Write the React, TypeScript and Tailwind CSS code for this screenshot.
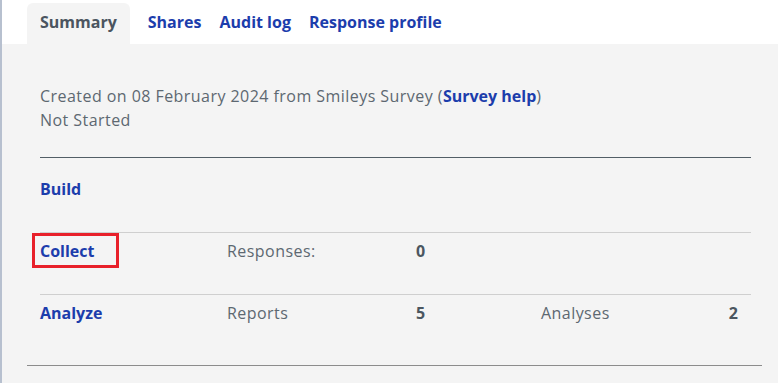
export default function App() {
  const link = "font-bold text-[#1c3dac] tracking-normal";
  const label = "text-[#5d6871] tracking-[0.45px]";
  const num = "font-bold text-[#4b5660]";

  return (
    <div
      className="min-h-[383px] w-full bg-white border-l-2 border-[#b7c0cf] text-[16px] leading-6"
      style={{ fontFamily: "'Open Sans', Lato, sans-serif" }}
    >
      {/* Tabs */}
      <nav className="flex h-[44px] items-end pl-[25px]">
        <div className="h-[41px] rounded-t-md bg-[#f4f4f4] px-[13px] pt-[7px] font-bold text-[#4b5560]">
          Summary
        </div>
        <div className="flex h-[41px] gap-[18px] pl-[18px] pt-[7px]">
          <a className={link}>Shares</a>
          <a className={link}>Audit log</a>
          <a className={link}>Response profile</a>
        </div>
      </nav>

      {/* Summary panel */}
      <div className="min-h-[339px] bg-[#f4f4f4] pt-[40px]">
        <div className="ml-[25px] mr-[16px]">
          <div className="pl-[13px] pr-[11px]">
            <p className={label}>
              Created on 08 February 2024 from Smileys Survey (<a className={link}>Survey help</a>)
            </p>
            <p className={label}>Not Started</p>

            <div className="mt-[25px] mb-[13px] h-px bg-[#525e66]" />

            <div className="pt-[6px] pb-[31px]">
              <a className={link}>Build</a>
            </div>

            <div className="grid grid-cols-[187px_189px_125px_1fr] border-t border-[#cfcfcf] pt-[6px] pb-[31px]">
              <div>
                <a className={`${link} relative`}>
                  Collect
                  <span className="pointer-events-none absolute -left-[8px] top-[-7px] h-[35px] w-[87px] border-[3px] border-[#e8202a]" />
                </a>
              </div>
              <div className={label}>Responses:</div>
              <div className={num}>0</div>
              <div />
            </div>

            <div className="grid grid-cols-[187px_189px_125px_1fr] border-t border-[#cfcfcf] pt-[6px] pb-[31px]">
              <a className={link}>Analyze</a>
              <div className={label}>Reports</div>
              <div className={num}>5</div>
              <div className="flex justify-between pr-[13px]">
                <span className={label}>Analyses</span>
                <span className={num}>2</span>
              </div>
            </div>
          </div>
          <div className="mt-[9px] h-px bg-[#8c8c8c]" />
        </div>
      </div>
    </div>
  );
}
